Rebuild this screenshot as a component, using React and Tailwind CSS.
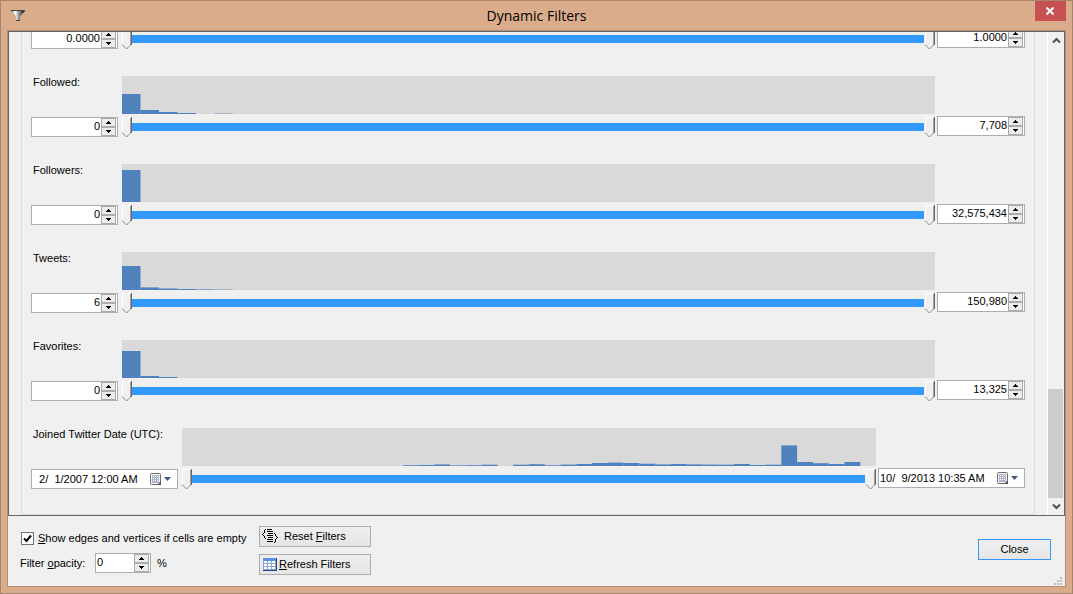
import React, { useState } from "react";

const countFilters = [
  { name: "Metric", min: "0.0000", max: "1.0000", bars: [] },
  {
    name: "Followed",
    label: "Followed:",
    min: "0",
    max: "7,708",
    bars: [20, 4, 2, 1, 0, 0.4],
  },
  {
    name: "Followers",
    label: "Followers:",
    min: "0",
    max: "32,575,434",
    bars: [32],
  },
  {
    name: "Tweets",
    label: "Tweets:",
    min: "6",
    max: "150,980",
    bars: [24, 2.6, 1.5, 1, 0.6, 0.4],
  },
  {
    name: "Favorites",
    label: "Favorites:",
    min: "0",
    max: "13,325",
    bars: [27, 2, 1],
  },
];

const joinedBars = [
  0, 0, 0, 0, 0, 0, 0, 0, 0, 0, 0, 0, 0, 0, 0.8, 1, 1.6, 0.6, 0.8, 1.3, 0,
  1.3, 1.8, 0.7, 1.4, 2, 3, 3.4, 3, 2.3, 1.6, 2, 1.6, 1.4, 1.3, 2, 1, 1.3,
  20.6, 4, 2.8, 2, 4, 0,
];

const Histogram = ({ bars, slots }) => (
  <svg
    className="block h-[38px] w-full bg-[#d9d9d9]"
    viewBox={`0 0 ${slots} 38`}
    preserveAspectRatio="none"
    aria-hidden="true"
  >
    {bars.map((h, i) => (
      <rect key={i} x={i} y={38 - h} width="1" height={h} fill="#4f81bd" />
    ))}
  </svg>
);

const Thumb = () => (
  <svg width="11" height="22" viewBox="0 0 11 22" className="shrink-0">
    <path d="M0.5 1.5H10.5V16L5.5 21L0.5 16Z" fill="#f0f0f0" />
    <path d="M1.5 16V1.5H9" fill="none" stroke="#fff" />
    <path d="M10.5 1V17" stroke="#696969" />
    <path d="M9.5 2V17" stroke="#a0a0a0" />
    <path d="M1 16.5L5.5 21L10 16.5" fill="none" stroke="#8a8a8a" />
  </svg>
);

const RangeSlider = ({ name }) => {
  const [low, setLow] = useState(0);
  const [high, setHigh] = useState(100);

  return (
    <div className="relative flex h-[22px] items-center">
      <div style={{ flexGrow: low }} />
      <Thumb />
      <div className="h-2 bg-[#3399ff]" style={{ flexGrow: high - low }} />
      <Thumb />
      <div style={{ flexGrow: 100 - high }} />
      <input
        type="range"
        aria-label={`${name} minimum`}
        value={low}
        onChange={(e) => setLow(Math.min(Number(e.target.value), high))}
        className="absolute inset-y-0 left-0 w-1/2 opacity-0"
      />
      <input
        type="range"
        aria-label={`${name} maximum`}
        value={high}
        onChange={(e) => setHigh(Math.max(Number(e.target.value), low))}
        className="absolute inset-y-0 right-0 w-1/2 opacity-0"
      />
    </div>
  );
};

const SpinButton = ({ label, up }) => (
  <button
    type="button"
    aria-label={label}
    className="flex h-[9px] w-[15px] items-center justify-center border border-[#acacac] bg-[#ececec]"
  >
    <svg width="5" height="3" viewBox="0 0 5 3" shapeRendering="crispEdges">
      <path d={up ? "M2 0h1v1h1v1h1v1H0V2h1V1h1z" : "M0 0h5v1H4v1H3v1H2V2H1V1H0z"} />
    </svg>
  </button>
);

const Spinner = ({ id, label, value, width, align }) => (
  <div
    className={`flex h-5 items-start border border-[#abadb3] bg-white pr-px ${width}`}
  >
    <input
      id={id}
      aria-label={id ? undefined : label}
      defaultValue={value}
      className={`h-4 min-w-0 flex-1 bg-transparent px-px outline-none ${align}`}
    />
    <div className="flex flex-col">
      <SpinButton label={`Increase ${label}`} up />
      <SpinButton label={`Decrease ${label}`} />
    </div>
  </div>
);

const DatePicker = ({ label, value }) => (
  <div className="flex h-5 w-[147px] items-center border border-[#abadb3] bg-white pr-[5px]">
    <input
      aria-label={label}
      defaultValue={value}
      className="h-4 min-w-0 flex-1 bg-transparent pl-px outline-none"
    />
    <button type="button" aria-label={`Pick ${label}`} className="flex items-center gap-px">
      <svg width="12" height="13" viewBox="0 0 12 13">
        <path d="M1.5 0.5H9.5Q10.5 0.5 10.5 1.5V9L8 11.5H1.5Q0.5 11.5 0.5 10.5V1.5Q0.5 0.5 1.5 0.5Z" fill="#f4f5f8" stroke="#76696a" />
        <path d="M7.5 12L11 8.5V12Z" fill="#5d5052" />
        <path d="M2 2H9V10H2Z" fill="#a9b6cc" />
        <path d="M3 3h1v1H3zM5 3h1v1H5zM7 3h1v1H7zM3 5h1v1H3zM5 5h1v1H5zM7 5h1v1H7zM3 7h1v1H3zM5 7h1v1H5zM7 7h1v1H7z" fill="#fff" />
      </svg>
      <svg width="9" height="5" viewBox="0 0 9 5">
        <path d="M1 0H8L4.5 4Z" fill="#44587c" />
      </svg>
    </button>
  </div>
);

const FilterRow = ({ name, label, bars, slots, min, max }) => (
  <div className="flex h-[88px] items-start px-[9px] pt-px">
    <div className="flex flex-col">
      <div className="mb-7 h-[14px] pl-0.5">{label}</div>
      {min}
    </div>
    <div className="ml-[3px] min-w-0 flex-1 pt-px">
      <div className="pl-px">
        <Histogram bars={bars} slots={slots} />
      </div>
      <div className="pt-0.5">
        <RangeSlider name={name} />
      </div>
    </div>
    <div className="ml-0.5 pt-[41px]">{max}</div>
  </div>
);

const ScrollBar = () => (
  <div className="flex w-[17px] shrink-0 flex-col border-l border-white bg-[#f0f0f0]">
    <button type="button" aria-label="Scroll up" className="flex h-[17px] items-center justify-center">
      <svg width="9" height="7" viewBox="0 0 9 7" fill="none" stroke="#505050" strokeWidth="2">
        <path d="M1 5.5L4.5 2L8 5.5" />
      </svg>
    </button>
    <div className="flex flex-1 flex-col justify-end">
      <div className="mr-px h-[109px] bg-[#cdcdcd]" />
    </div>
    <button type="button" aria-label="Scroll down" className="flex h-[17px] items-center justify-center">
      <svg width="9" height="7" viewBox="0 0 9 7" fill="none" stroke="#505050" strokeWidth="2">
        <path d="M1 1.5L4.5 5L8 1.5" />
      </svg>
    </button>
  </div>
);

const FunnelIcon = () => (
  <svg width="14" height="12" viewBox="0 0 14 12">
    <defs>
      <linearGradient id="funnel">
        <stop offset="0" stopColor="#777" />
        <stop offset="0.3" stopColor="#fff" />
        <stop offset="0.55" stopColor="#999" />
        <stop offset="0.9" stopColor="#222" />
      </linearGradient>
    </defs>
    <path d="M0 0H14V1L9 6V11H5V6L0 1Z" fill="url(#funnel)" />
    <path d="M0 0.5H14M5 10.5H9" stroke="#444" />
  </svg>
);

const ResetIcon = () => (
  <svg width="16" height="14" viewBox="0 0 16 14" shapeRendering="crispEdges">
    <path d="M3 0h1v1H3zM2 1h1v3H2zM1 4h1v1H1zM0 5h1v1H0zM1 6h1v1H1zM2 7h1v2H2zM3 9h1v1H3z" />
    <path d="M12 4h1v1h-1zM13 5h1v2h-1zM14 7h1v1h-1zM15 8h1v1h-1zM14 9h1v1h-1zM13 10h1v3h-1zM12 13h1v1h-1z" />
    <path d="M5 0h5v1H5zM5 2h6v1H5zM6 4h5v1H6zM5 6h6v1H5zM6 8h5v1H6zM5 10h6v1H5zM5 12h6v1H5z" />
  </svg>
);

const TableIcon = () => (
  <svg width="14" height="13" viewBox="0 0 14 13" shapeRendering="crispEdges">
    <path d="M0 0H14V13H0Z" fill="#8aa2d4" />
    <path d="M0 0H14V3H0Z" fill="#5b8fee" />
    <path d="M13 0H14V13H0V12H13Z" fill="#2b3f8c" />
    <path d="M1 3H4V5H1ZM5 3H8V5H5ZM9 3H12V5H9ZM1 6H4V8H1ZM5 6H8V8H5ZM9 6H12V8H9ZM1 9H4V11H1ZM5 9H8V11H5ZM9 9H12V11H9Z" fill="#fff" />
  </svg>
);

const App = () => {
  return (
    <div className="flex min-h-screen flex-col border border-[#a9846c] bg-[#dbac8b] px-1.5 pb-1.5 font-['Liberation_Sans',sans-serif] text-[11px] leading-[14px] text-black">
      <header className="flex h-[29px] items-start justify-between">
        <div className="w-[31px] pt-[9px] pl-1">
          <FunnelIcon />
        </div>
        <h1 className="pt-[5px] font-['Open_Sans',sans-serif] text-[14px] leading-[20px]">
          Dynamic Filters
        </h1>
        <button
          type="button"
          aria-label="Close window"
          className="flex h-5 w-[31px] items-center justify-center bg-[#c75050]"
        >
          <svg width="8" height="8" viewBox="0 0 8 8" stroke="#fff" strokeWidth="2">
            <path d="M0.5 0.5L7.5 7.5M7.5 0.5L0.5 7.5" />
          </svg>
        </button>
      </header>

      <main className="flex flex-1 flex-col border border-[#b58d73] bg-[#f0f0f0]">
        <section className="flex h-[485px] border border-[#646464]">
          <div className="flex min-w-0 flex-1 flex-col justify-end overflow-hidden px-3">
            <div className="shrink-0 border border-[#dcdcdc]">
              {countFilters.map((f) => (
                <FilterRow
                  key={f.name}
                  name={f.name}
                  label={f.label}
                  bars={f.bars}
                  slots={44}
                  min={<Spinner label={`${f.name} minimum`} value={f.min} width="w-[87px]" align="text-right" />}
                  max={<Spinner label={`${f.name} maximum`} value={f.max} width="w-[88px]" align="text-right" />}
                />
              ))}
              <FilterRow
                name="Joined date"
                label="Joined Twitter Date (UTC):"
                bars={joinedBars}
                slots={44}
                min={<DatePicker label="start date" value="  2/  1/2007 12:00 AM" />}
                max={<DatePicker label="end date" value="10/  9/2013 10:35 AM" />}
              />
            </div>
          </div>
          <ScrollBar />
        </section>

        <footer className="flex items-start pt-2.5 pl-3">
          <div className="w-[239px]">
            <label className="flex items-center gap-1 pt-[5px] pl-px whitespace-nowrap">
              <span className="grid">
                <input
                  type="checkbox"
                  defaultChecked
                  className="peer col-start-1 row-start-1 size-[13px] appearance-none border border-[#707070] bg-white"
                />
                <svg
                  className="pointer-events-none invisible col-start-1 row-start-1 peer-checked:visible"
                  width="13"
                  height="13"
                  viewBox="0 0 13 13"
                >
                  <path d="M3 6.5L5.5 9L10 3.5" fill="none" stroke="#000" strokeWidth="2" />
                </svg>
              </span>
              <span>
                <u>S</u>how edges and vertices if cells are empty
              </span>
            </label>
            <div className="mt-2 flex items-center">
              <label htmlFor="opacity" className="w-[75px]">
                Filter <u>o</u>pacity:
              </label>
              <Spinner id="opacity" label="opacity" value="0" width="w-14" align="text-left" />
              <span className="pl-1.5">%</span>
            </div>
          </div>
          <div className="flex flex-col gap-[7px]">
            <button
              type="button"
              className="flex h-[21px] w-28 items-center gap-1.5 border border-[#acacac] bg-linear-to-b from-[#efefef] to-[#e5e5e5] pb-px pl-0.5"
            >
              <ResetIcon />
              <span>
                Reset <u>F</u>ilters
              </span>
            </button>
            <button
              type="button"
              className="flex h-[21px] w-28 items-center gap-0.5 border border-[#acacac] bg-linear-to-b from-[#efefef] to-[#e5e5e5] pb-px pl-[3px]"
            >
              <TableIcon />
              <span>
                <u>R</u>efresh Filters
              </span>
            </button>
          </div>
          <button
            type="button"
            className="mt-[13px] mr-3.5 ml-auto h-[21px] w-[73px] border border-[#3399ff] bg-linear-to-b from-[#efefef] to-[#e5e5e5] pb-px"
          >
            Close
          </button>
        </footer>
        <svg className="mt-auto mr-0.5 self-end" width="9" height="9" viewBox="0 0 9 9" fill="#bfbfbf">
          <path d="M6 0h2v2H6zM6 3h2v2H6zM3 3h2v2H3zM6 6h2v2H6zM3 6h2v2H3zM0 6h2v2H0z" />
        </svg>
      </main>
    </div>
  );
};

export default App;
